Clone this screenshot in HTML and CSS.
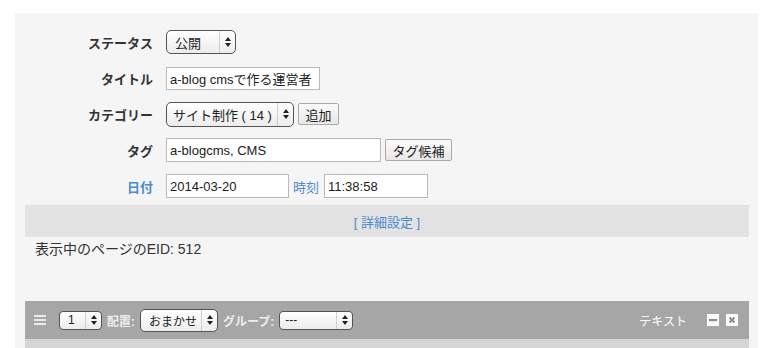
FILE: index.html
```html
<!DOCTYPE html>
<html lang="ja">
  <head>
    <meta charset="UTF-8" />
    <title>エントリー編集</title>
    <link rel="stylesheet" href="styles.css">
  </head>
  <body>
    <div class="panel">
      <div class="form-row">
        <span class="label">ステータス</span>
        <div class="field">
          <div class="select select-status">
            <span class="select-value">公開</span>
            <span class="select-arrow"><svg width="6" height="10" viewBox="0 0 6 10"><polygon points="0,4 3,0 6,4"/><polygon points="0,6 3,10 6,6"/></svg></span>
          </div>
        </div>
      </div>

      <div class="form-row">
        <span class="label">タイトル</span>
        <div class="field">
          <input class="text-input input-title" type="text" value="a-blog cmsで作る運営者">
        </div>
      </div>

      <div class="form-row">
        <span class="label">カテゴリー</span>
        <div class="field">
          <div class="select select-category">
            <span class="select-value">サイト制作 ( 14 )</span>
            <span class="select-arrow"><svg width="6" height="10" viewBox="0 0 6 10"><polygon points="0,4 3,0 6,4"/><polygon points="0,6 3,10 6,6"/></svg></span>
          </div>
          <button class="btn btn-add">追加</button>
        </div>
      </div>

      <div class="form-row">
        <span class="label">タグ</span>
        <div class="field">
          <input class="text-input input-tag" type="text" value="a-blogcms, CMS">
          <button class="btn btn-tag">タグ候補</button>
        </div>
      </div>

      <div class="form-row">
        <span class="label label-link">日付</span>
        <div class="field">
          <input class="text-input input-date" type="text" value="2014-03-20">
          <span class="sub-label">時刻</span>
          <input class="text-input input-time" type="text" value="11:38:58">
        </div>
      </div>

      <div class="detail-bar">
        <a class="detail-link" href="#">[ 詳細設定 ]</a>
      </div>

      <p class="eid">表示中のページのEID: 512</p>

      <!-- ユニットのヘッダー -->
      <div class="unit-head">
        <span class="unit-handle"><span></span><span></span><span></span></span>
        <div class="select select-small select-sort">
          <span class="select-value">1</span>
          <span class="select-arrow"><svg width="6" height="10" viewBox="0 0 6 10"><polygon points="0,4 3,0 6,4"/><polygon points="0,6 3,10 6,6"/></svg></span>
        </div>
        <span class="unit-label">配置:</span>
        <div class="select select-align">
          <span class="select-value">おまかせ</span>
          <span class="select-arrow"><svg width="6" height="10" viewBox="0 0 6 10"><polygon points="0,4 3,0 6,4"/><polygon points="0,6 3,10 6,6"/></svg></span>
        </div>
        <span class="unit-label">グループ:</span>
        <div class="select select-small select-group">
          <span class="select-value">---</span>
          <span class="select-arrow"><svg width="6" height="10" viewBox="0 0 6 10"><polygon points="0,4 3,0 6,4"/><polygon points="0,6 3,10 6,6"/></svg></span>
        </div>

        <span class="unit-type">テキスト</span>
        <span class="unit-icon"><svg width="12" height="12" viewBox="0 0 12 12"><rect x="2" y="5" width="8" height="2.2" fill="#8a8a8a"/></svg></span>
        <span class="unit-icon"><svg width="12" height="12" viewBox="0 0 12 12"><path d="M3.5 3.5 L8.5 8.5 M8.5 3.5 L3.5 8.5" stroke="#8a8a8a" stroke-width="1.8"/></svg></span>
      </div>
      <div class="unit-body"></div>
    </div>
  </body>
</html>
```

FILE: styles.css
```css
body {
  margin: 0;
  padding: 0;
  background-color: #fff;
  font-family: 'Liberation Sans', 'Noto Sans CJK JP', sans-serif;
  font-size: 13px;
  color: #333;
}

.panel {
  margin: 13px 17px 0 15px;
  padding-top: 11px;
  background-color: #f5f5f5;
  height: 335px;
  overflow: hidden;
}

/* フォームの行 */
.form-row {
  display: grid;
  grid-template-columns: 138px 1fr;
  column-gap: 13px;
  align-items: center;
  height: 36px;
}

.label {
  text-align: right;
  font-weight: bold;
  color: #333;
}

.label-link {
  color: #4d8ace;
}

.field {
  display: flex;
  align-items: center;
  gap: 4px;
}

.sub-label {
  color: #4d8ace;
  margin-right: 1px;
}

/* テキスト入力 */
.text-input {
  box-sizing: border-box;
  height: 24px;
  padding: 0 3px;
  border: 1px solid #b9b9b9;
  background-color: #fff;
  font-family: inherit;
  font-size: 13px;
  color: #222;
  outline: none;
}

.input-title { width: 154px; height: 23px; }
.input-tag { width: 215px; }
.input-date { width: 123px; }
.input-time { width: 104px; }

/* ボタン */
.btn {
  box-sizing: border-box;
  height: 22px;
  padding: 0 6px;
  border: 1px solid #a9a9a9;
  border-radius: 2px;
  background: linear-gradient(#fafafa, #e8e8e8);
  font-family: inherit;
  font-size: 13px;
  color: #222;
}

.btn-add { width: 41px; }
.btn-tag { width: 67px; }

/* セレクト */
.select {
  box-sizing: border-box;
  display: inline-flex;
  flex-shrink: 0;
  align-items: stretch;
  height: 24px;
  border: 1px solid #555;
  border-radius: 5px;
  background: linear-gradient(#ffffff, #ececec);
  color: #222;
  font-size: 13px;
}

.select-value {
  flex: 1;
  display: flex;
  align-items: center;
  padding-left: 8px;
  white-space: nowrap;
  overflow: hidden;
}

.select-arrow {
  width: 15px;
  flex-shrink: 0;
  display: flex;
  align-items: center;
  justify-content: center;
  border-left: 1px solid #d0d0d0;
}

.select-arrow svg {
  fill: #222;
}

.select-status { width: 70px; }
.select-category { width: 128px; height: 25px; }
.select-category .select-value { padding-left: 6px; }

.select-small {
  height: 19px;
  border-radius: 4px;
  font-size: 12px;
}

.select-sort { width: 43px; margin-left: 13px; }
.select-group { width: 74px; margin-left: 5px; }
.select-group .select-value { padding-left: 5px; }
.select-align { width: 78px; height: 23px; margin-left: 5px; font-size: 12px; }

/* 詳細設定 */
.detail-bar {
  margin: 1px 9px 0 10px;
  height: 32px;
  background-color: #e3e3e3;
  display: flex;
  align-items: center;
  justify-content: center;
}

.detail-link {
  color: #4d8ace;
  text-decoration: none;
  font-size: 13px;
}

.eid {
  margin: 3px 0 0 20px;
  height: 18px;
  line-height: 18px;
  font-size: 14px;
  color: #333;
}

/* ユニット */
.unit-head {
  margin: 43px 9px 0 10px;
  height: 38px;
  padding: 0 11px 0 9px;
  background-color: #a6a6a6;
  display: flex;
  align-items: center;
}

.unit-handle {
  display: flex;
  flex-direction: column;
  gap: 2px;
  width: 12px;
}

.unit-handle span {
  height: 2px;
  background-color: #eee;
}

.unit-label {
  color: #eee;
  font-weight: bold;
  font-size: 12px;
  margin-left: 5px;
}

.unit-type {
  margin-left: auto;
  margin-right: 13px;
  color: #fff;
  font-size: 12px;
}

.unit-icon {
  width: 12px;
  height: 12px;
  background-color: #fafafa;
  display: flex;
  margin-left: 7px;
}

.unit-body {
  margin: 0 9px 0 10px;
  height: 20px;
  background-color: #d5d5d5;
}
```
